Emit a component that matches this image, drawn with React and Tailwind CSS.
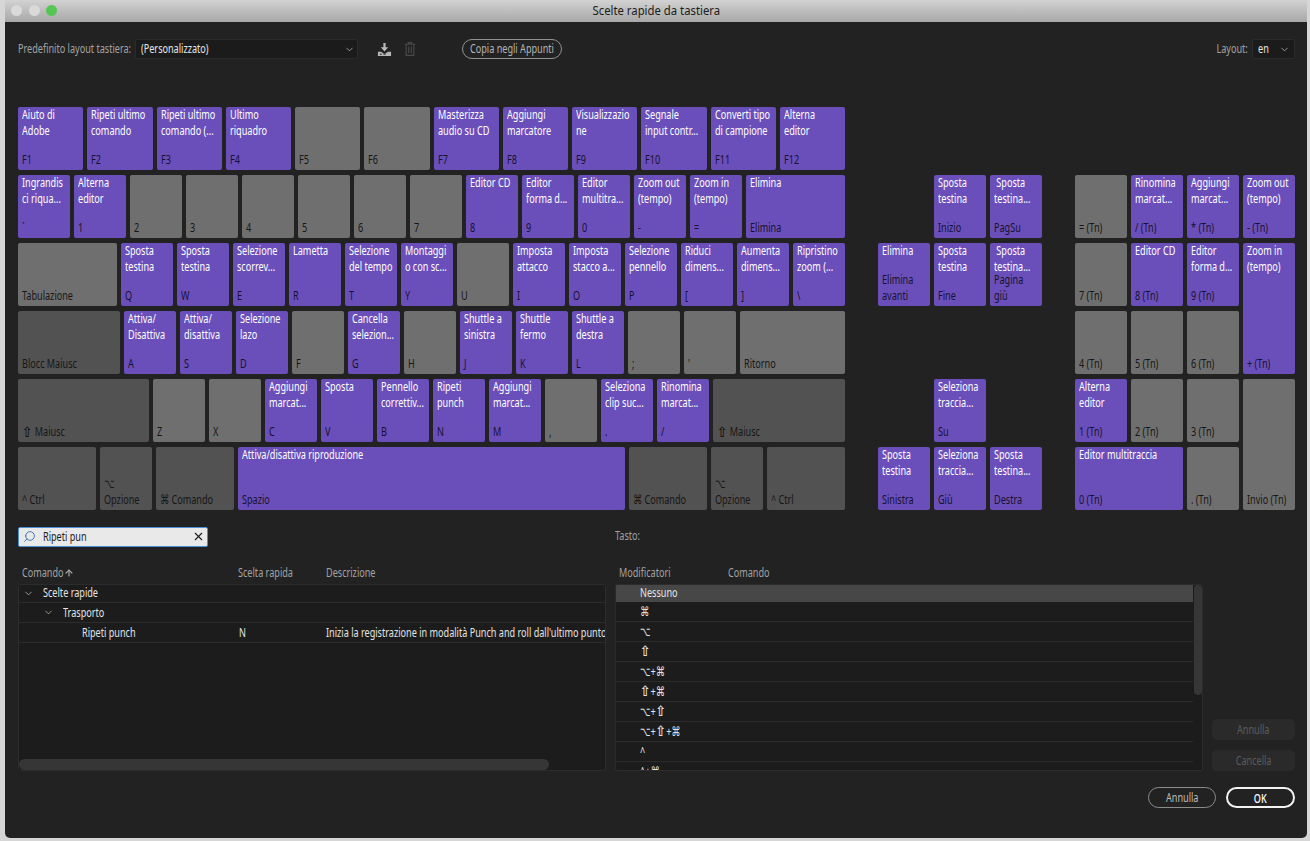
import { ChevronDown, Search, X, ArrowUp } from 'lucide-react'

// the shift arrow comes out too thin once squeezed, so it gets its width back
const withShift = (text) =>
  typeof text != 'string'
    ? text
    : text.split(/(⇧)/).map((part, i) =>
        part == '⇧' ? (
          <span key={i} className="mx-[2px] inline-block scale-x-[1.35] scale-y-[1.1] font-bold">{part}</span>
        ) : (
          part
        ),
      )

// the reference type is narrow, none of the installed fonts is, so squeeze it
const Narrow = ({ children, className = '' }) => (
  <span className={`inline-block origin-left scale-x-[.7] whitespace-pre ${className}`}>{withShift(children)}</span>
)

const Centered = ({ children }) => (
  <span className="inline-block scale-x-[.7] whitespace-pre">{children}</span>
)

const Key = ({ title, label, tone = 'gray', className = '' }) => {
  const tones = {
    purple: 'bg-[#6a4fba]',
    gray: 'bg-[#6f6f6f]',
    dark: 'bg-[#525252]',
  }
  return (
    <div className={`flex h-full min-h-[63px] flex-col justify-between rounded-[2px] pb-[3px] pl-1 leading-4 ${tones[tone]} ${className}`}>
      <Narrow className="-mt-px h-[28px] text-white">{title}</Narrow>
      <Narrow className={tone == 'purple' ? 'text-[#17122e]' : 'text-[#161616]'}>{label}</Narrow>
    </div>
  )
}

const fRow = [
  ['Aiuto di\nAdobe', 'F1'], ['Ripeti ultimo\ncomando', 'F2'], ['Ripeti ultimo\ncomando (...', 'F3'], ['Ultimo\nriquadro', 'F4'],
  ['', 'F5'], ['', 'F6'], ['Masterizza\naudio su CD', 'F7'], ['Aggiungi\nmarcatore', 'F8'],
  ['Visualizzazio\nne', 'F9'], ['Segnale\ninput contr...', 'F10'], ['Converti tipo\ndi campione', 'F11'], ['Alterna\neditor', 'F12'],
]
const numRow = [
  ['Ingrandis\nci riqua...', '`'], ['Alterna\neditor', '1'], ['', '2'], ['', '3'], ['', '4'], ['', '5'], ['', '6'], ['', '7'],
  ['Editor CD', '8'], ['Editor\nforma d...', '9'], ['Editor\nmultitra...', '0'], ['Zoom out\n(tempo)', '-'], ['Zoom in\n(tempo)', '='], ['Elimina', 'Elimina'],
]
const tabRow = [
  ['', 'Tabulazione'], ['Sposta\ntestina', 'Q'], ['Sposta\ntestina', 'W'], ['Selezione\nscorrev...', 'E'], ['Lametta', 'R'], ['Selezione\ndel tempo', 'T'],
  ['Montaggi\no con sc...', 'Y'], ['', 'U'], ['Imposta\nattacco', 'I'], ['Imposta\nstacco a...', 'O'], ['Selezione\npennello', 'P'],
  ['Riduci\ndimens...', '['], ['Aumenta\ndimens...', ']'], ['Ripristino\nzoom (...', '\\'],
]
const capsRow = [
  ['', 'Blocc Maiusc', 'dark'], ['Attiva/\nDisattiva', 'A'], ['Attiva/\ndisattiva', 'S'], ['Selezione\nlazo', 'D'], ['', 'F'], ['Cancella\nselezion...', 'G'],
  ['', 'H'], ['Shuttle a\nsinistra', 'J'], ['Shuttle\nfermo', 'K'], ['Shuttle a\ndestra', 'L'], ['', ';'], ['', "'"], ['', 'Ritorno'],
]
const shiftRow = [
  ['', '⇧ Maiusc', 'dark'], ['', 'Z'], ['', 'X'], ['Aggiungi\nmarcat...', 'C'], ['Sposta', 'V'], ['Pennello\ncorrettiv...', 'B'], ['Ripeti\npunch', 'N'],
  ['Aggiungi\nmarcat...', 'M'], ['', ','], ['Seleziona\nclip suc...', '.'], ['Rinomina\nmarcat...', '/'], ['', '⇧ Maiusc', 'dark'],
]
const ctrlRow = [
  ['', '^ Ctrl', 'dark'], ['', '⌥\nOpzione', 'dark'], ['', '⌘ Comando', 'dark'], ['Attiva/disattiva riproduzione', 'Spazio'],
  ['', '⌘ Comando', 'dark'], ['', '⌥\nOpzione', 'dark'], ['', '^ Ctrl', 'dark'],
]

const keys = (row) =>
  row.map(([title, label, tone], i) => (
    <Key key={i} title={title} label={label} tone={tone || (title ? 'purple' : 'gray')} />
  ))

const modifiers = ['⌘', '⌥', '⇧', '⌥+⌘', '⇧+⌘', '⌥+⇧', '⌥+⇧+⌘', '^', '^+⌘']

const App = () => {
  return (
    <div className="h-[841px] w-[1310px] overflow-hidden bg-[#d6d6d6] pl-[5px] font-['Noto_Sans','DejaVu_Sans',sans-serif] text-[13px]">
      <div className="flex h-[838px] w-[1302px] flex-col overflow-hidden rounded-b-[5px] bg-[#222222]">
        <div className="relative flex h-[22px] shrink-0 items-center justify-center bg-gradient-to-b from-[#d2d2d2] to-[#a8a8a8] text-[#1c1c1c]">
          <div className="absolute left-[6px] top-[5px] flex gap-[6.5px]">
            <span className="size-[11px] rounded-full bg-[#d9d9d9]" />
            <span className="size-[11px] rounded-full bg-[#d9d9d9]" />
            <span className="size-[11px] rounded-full bg-[#55c653]" />
          </div>
          <span className="inline-block scale-x-[.87] whitespace-pre">Scelte rapide da tastiera</span>
        </div>

        <div className="flex flex-1 flex-col pl-[13px] pr-3">
          <div className="mt-[17px] flex h-5 items-center text-[#a3a3a3]">
            <div className="w-[117px] shrink-0"><Narrow>Predefinito layout tastiera:</Narrow></div>
            <div className="flex h-5 w-[223px] shrink-0 items-center justify-between rounded-[2px] border border-[#2b2b2b] bg-[#1b1b1b] pl-[5px] pr-[2px] text-[#e8e8e8]">
              <Narrow>(Personalizzato)</Narrow>
              <ChevronDown size={11} strokeWidth={1.5} className="text-[#c8c8c8]" />
            </div>
            <svg viewBox="0 0 16 16" className="ml-[19px] size-[15px] text-[#b8b8b8]" fill="currentColor">
              <path d="M6.800 1h2.400v4.500H12L8 10 4 5.500h2.800z" />
              <path fillRule="evenodd" d="M1 10.500h3.500L8 13l3.500-2.500H15V15H1zM3 12.500v1h2v-1zM7 12.500v1h2v-1z" />
            </svg>
            <svg viewBox="0 0 14 18" className="ml-[12px] h-[16px] w-[12px] text-[#4a4a4a]" fill="none" stroke="currentColor" strokeWidth="1.300">
              <path d="M1 3.500h12M5 3.500V1.500h4v2M2.500 3.500v13h9v-13M5.500 6v8M8.500 6v8" />
            </svg>
            <button className="ml-[46px] flex h-5 w-[100px] shrink-0 items-center justify-center rounded-full border border-[#929292] text-[#b4b4b4]"><Centered>Copia negli Appunti</Centered></button>
            <span className="ml-auto inline-block origin-right scale-x-[.7] whitespace-pre text-[#a3a3a3]">Layout:</span>
            <div className="ml-1 flex h-5 w-[43px] shrink-0 items-center justify-between rounded-[2px] border border-[#2b2b2b] bg-[#1b1b1b] pl-[5px] pr-1 text-[#e8e8e8]">
              <Narrow>en</Narrow>
              <ChevronDown size={11} strokeWidth={1.5} className="text-[#c8c8c8]" />
            </div>
          </div>

          <div className="mt-[48px] flex gap-[33px]">
            <div className="flex w-[827px] flex-col gap-[5px]">
              <div className="grid h-[63px] grid-cols-12 gap-1">{keys(fRow)}</div>
              <div className="grid h-[63px] grid-cols-[repeat(13,52px)_1fr] gap-1">{keys(numRow)}</div>
              <div className="grid h-[63px] grid-cols-[1fr_repeat(13,52px)] gap-1">{keys(tabRow)}</div>
              <div className="grid h-[63px] grid-cols-[102px_repeat(11,52px)_1fr] gap-1">{keys(capsRow)}</div>
              <div className="grid h-[63px] grid-cols-[131px_repeat(10,52px)_1fr] gap-1">{keys(shiftRow)}</div>
              <div className="grid h-[63px] grid-cols-[78px_52px_78px_1fr_78px_52px_78px] gap-1">{keys(ctrlRow)}</div>
            </div>

            <div className="grid grid-cols-[repeat(3,52px)] grid-rows-[repeat(6,63px)] gap-x-1 gap-y-[5px]">
              <Key tone="purple" className="col-start-2 row-start-2" title={'Sposta\ntestina'} label="Inizio" />
              <Key tone="purple" className="col-start-3 row-start-2" title={' Sposta\ntestina...'} label="PagSu" />
              <Key tone="purple" className="col-start-1 row-start-3" title="Elimina" label={'Elimina\navanti'} />
              <Key tone="purple" className="col-start-2 row-start-3" title={'Sposta\ntestina'} label="Fine" />
              <Key tone="purple" className="col-start-3 row-start-3" title={' Sposta\ntestina...'} label={'Pagina\ngiù'} />
              <Key tone="purple" className="col-start-2 row-start-5" title={'Seleziona\ntraccia...'} label="Su" />
              <Key tone="purple" className="col-start-1 row-start-6" title={'Sposta\ntestina'} label="Sinistra" />
              <Key tone="purple" className="col-start-2 row-start-6" title={'Seleziona\ntraccia...'} label="Giù" />
              <Key tone="purple" className="col-start-3 row-start-6" title={'Sposta\ntestina...'} label="Destra" />
            </div>

            <div className="grid grid-cols-[repeat(4,52px)] grid-rows-[repeat(6,63px)] gap-x-1 gap-y-[5px]">
              <Key className="col-start-1 row-start-2" label="= (Tn)" />
              <Key tone="purple" className="col-start-2 row-start-2" title={'Rinomina\nmarcat...'} label="/ (Tn)" />
              <Key tone="purple" className="col-start-3 row-start-2" title={'Aggiungi\nmarcat...'} label="* (Tn)" />
              <Key tone="purple" className="col-start-4 row-start-2" title={'Zoom out\n(tempo)'} label="- (Tn)" />
              <Key className="col-start-1 row-start-3" label="7 (Tn)" />
              <Key tone="purple" className="col-start-2 row-start-3" title="Editor CD" label="8 (Tn)" />
              <Key tone="purple" className="col-start-3 row-start-3" title={'Editor\nforma d...'} label="9 (Tn)" />
              <Key tone="purple" className="col-start-4 row-span-2 row-start-3" title={'Zoom in\n(tempo)'} label="+ (Tn)" />
              <Key className="col-start-1 row-start-4" label="4 (Tn)" />
              <Key className="col-start-2 row-start-4" label="5 (Tn)" />
              <Key className="col-start-3 row-start-4" label="6 (Tn)" />
              <Key tone="purple" className="col-start-1 row-start-5" title={'Alterna\neditor'} label="1 (Tn)" />
              <Key className="col-start-2 row-start-5" label="2 (Tn)" />
              <Key className="col-start-3 row-start-5" label="3 (Tn)" />
              <Key className="col-start-4 row-span-2 row-start-5" label="Invio (Tn)" />
              <Key tone="purple" className="col-span-2 col-start-1 row-start-6" title="Editor multitraccia" label="0 (Tn)" />
              <Key className="col-start-3 row-start-6" label=". (Tn)" />
            </div>
          </div>

          <div className="mt-[17px] flex gap-[9px]">
            <div className="w-[588px] shrink-0">
              <div className="flex h-5 w-[190px] items-center rounded-[2px] border border-[#4b8fd6] bg-[#e9e9e9] pb-px pl-1 pr-[2px] text-[#1b1b1b]">
                <Search size={13} strokeWidth={1.6} className="-scale-x-100 text-[#2a68ad]" />
                <span className="ml-[7px] flex-1"><Narrow>Ripeti pun</Narrow></span>
                <X size={13} strokeWidth={2} />
              </div>
              <div className="mt-4 flex h-5 items-center pl-1 text-[#a3a3a3]">
                <span className="flex w-[216px] shrink-0 items-center">
                  <Narrow className="w-[42px]">Comando</Narrow>
                  <ArrowUp size={10} strokeWidth={3} />
                </span>
                <span className="w-[88px] shrink-0"><Narrow>Scelta rapida</Narrow></span>
                <Narrow>Descrizione</Narrow>
              </div>
              <div className="relative mt-px h-[187px] overflow-hidden rounded-[2px] border border-[#2c2c2c] bg-[#1c1c1c] text-[#e4e4e4]">
                <div className="flex h-[18px] items-center border-b border-[#2c2c2c] pb-px pl-[3px]">
                  <ChevronDown size={11} strokeWidth={1.5} className="ml-[1px] text-[#c8c8c8]" />
                  <span className="ml-[9px]"><Narrow>Scelte rapide</Narrow></span>
                </div>
                <div className="flex h-5 items-center border-b border-[#2c2c2c] pl-[23px]">
                  <ChevronDown size={11} strokeWidth={1.5} className="ml-[1px] text-[#c8c8c8]" />
                  <span className="ml-[9px]"><Narrow>Trasporto</Narrow></span>
                </div>
                <div className="flex h-5 items-center border-b border-[#2c2c2c] pl-[63px]">
                  <span className="w-[157px] shrink-0"><Narrow>Ripeti punch</Narrow></span>
                  <span className="w-[87px] shrink-0"><Narrow>N</Narrow></span>
                  <Narrow className="shrink-0">Inizia la registrazione in modalità Punch and roll dall'ultimo punto</Narrow>
                </div>
                <div className="absolute bottom-0 left-0 h-[11px] w-[530px] rounded-full bg-[#363636]" />
              </div>
            </div>

            <div className="w-[588px] shrink-0">
              <div className="flex h-5 items-center pb-[2px] text-[#a3a3a3]"><Narrow>Tasto:</Narrow></div>
              <div className="mt-4 flex h-5 items-center pl-1 text-[#a3a3a3]">
                <span className="w-[109px] shrink-0"><Narrow>Modificatori</Narrow></span>
                <Narrow>Comando</Narrow>
              </div>
              <div className="relative mt-px h-[187px] overflow-hidden rounded-[2px] border border-[#2c2c2c] bg-[#1c1c1c] pr-[9px] text-[#e4e4e4]">
                <div className="flex h-[17px] items-center bg-[#474747] pb-px pl-6"><Narrow>Nessuno</Narrow></div>
                {modifiers.map((m) => (
                  <div key={m} className="flex h-5 items-center border-b border-[#2c2c2c] pl-6"><Narrow>{m}</Narrow></div>
                ))}
                <div className="absolute right-0 top-0 h-[110px] w-2 rounded-full bg-[#363636]" />
              </div>
            </div>

            <div className="flex flex-1 flex-col justify-end gap-[10px]">
              <button className="h-[21px] rounded-[5px] bg-[#2a2a2a] text-[#5c5c5c]"><Centered>Annulla</Centered></button>
              <button className="h-[21px] rounded-[5px] bg-[#2a2a2a] text-[#5c5c5c]"><Centered>Cancella</Centered></button>
            </div>
          </div>

          <div className="mt-4 flex justify-end gap-[10px]">
            <button className="h-[21px] w-[68px] rounded-full border border-[#8c8c8c] text-[#bdbdbd]"><Centered>Annulla</Centered></button>
            <button className="h-[21px] w-[69px] rounded-full border-2 border-[#f2f2f2] font-medium text-white"><Centered>OK</Centered></button>
          </div>
        </div>
      </div>
    </div>
  )
}

export default App
